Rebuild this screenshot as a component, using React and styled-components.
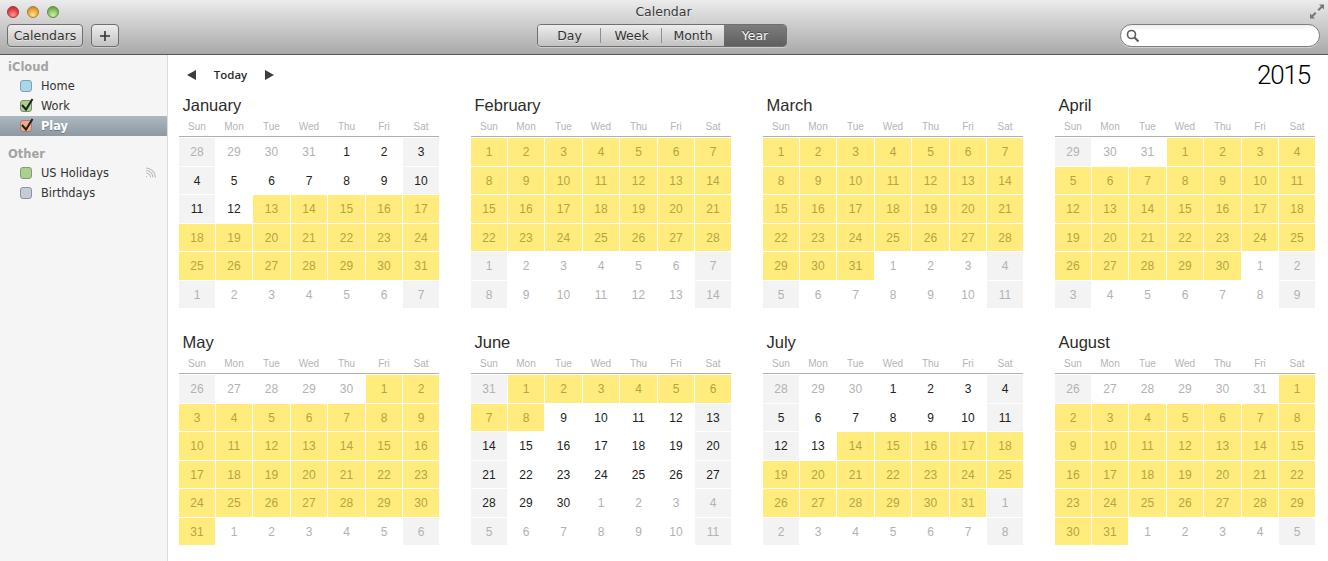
import React from "react";
import styled, { createGlobalStyle } from "styled-components";

const Global = createGlobalStyle`
  html, body { margin: 0; padding: 0; background: #fff; }
  body { width: 1328px; height: 561px; overflow: hidden; font-family: "DejaVu Sans", sans-serif; }
  * { box-sizing: border-box; }
`;

const Window = styled.div`
  width: 1328px;
  height: 561px;
  display: flex;
  flex-direction: column;
  overflow: hidden;
  background: #fff;
`;

const TitleBar = styled.header`
  position: relative;
  height: 55px;
  flex: none;
  background: linear-gradient(#ececec 0, #dcdcdc 12px, #a9a9a9 54px);
  border-bottom: 1px solid #565656;
  padding: 0 8px 0 7px;
`;

const Lights = styled.div`
  position: absolute;
  left: 7px;
  top: 6px;
  display: flex;
  gap: 8px;
`;

const Light = styled.span`
  width: 12px;
  height: 12px;
  border-radius: 50%;
  border: 1px solid ${p => p.$edge};
  background: radial-gradient(circle at 50% 80%, ${p => p.$glow} 0, ${p => p.$color} 55%, ${p => p.$dark} 100%);
`;

const WindowTitle = styled.div`
  height: 24px;
  padding-top: 4px;
  text-align: center;
  font-size: 12.5px;
  line-height: 16px;
  color: #3a3a3a;
  text-shadow: 0 1px 0 rgba(255, 255, 255, 0.5);
`;

const Expand = styled.svg`
  position: absolute;
  right: 3px;
  top: 4px;
`;

const Toolbar = styled.div`
  display: flex;
  align-items: center;
  height: 23px;
`;

const Button = styled.button`
  height: 23px;
  width: ${p => p.$width}px;
  margin-right: 8px;
  padding: 0;
  display: flex;
  align-items: center;
  justify-content: center;
  font: 12.5px "DejaVu Sans", sans-serif;
  color: #333;
  border: 1px solid #6f6f6f;
  border-radius: 4px;
  background: linear-gradient(#ededed, #c2c2c2);
  box-shadow: 0 1px 0 rgba(255, 255, 255, 0.35);
  text-shadow: 0 1px 0 rgba(255, 255, 255, 0.5);
`;

const Segments = styled.div`
  display: flex;
  height: 23px;
  margin-left: 410px;
  border: 1px solid #6f6f6f;
  border-radius: 4px;
  overflow: hidden;
  box-shadow: 0 1px 0 rgba(255, 255, 255, 0.35);
`;

const Segment = styled.div`
  width: ${p => p.$width}px;
  display: flex;
  align-items: center;
  justify-content: center;
  font-size: 12.5px;
  color: ${p => (p.$active ? "#f4f4f4" : "#333")};
  background: ${p => (p.$active ? "linear-gradient(#7d7d7d, #5f5f5f)" : "linear-gradient(#ededed, #c2c2c2)")};
  text-shadow: ${p => (p.$active ? "0 -1px 0 rgba(0,0,0,.4)" : "0 1px 0 rgba(255,255,255,.5)")};
  position: relative;
  &::after {
    content: "";
    display: ${p => (p.$divider ? "block" : "none")};
    position: absolute;
    right: 0;
    top: 3px;
    bottom: 3px;
    width: 1px;
    background: #8f8f8f;
  }
`;

const Search = styled.div`
  margin-left: auto;
  width: 200px;
  height: 23px;
  display: flex;
  align-items: center;
  padding-left: 5px;
  border: 1px solid #7d7d7d;
  border-radius: 12px;
  background: linear-gradient(#f0f0f0, #fff 6px);
  box-shadow: 0 1px 0 rgba(255, 255, 255, 0.4);
`;

const Body = styled.div`
  flex: 1;
  display: flex;
  min-height: 0;
`;

const Sidebar = styled.aside`
  width: 168px;
  flex: none;
  background: #f5f5f5;
  border-right: 1px solid #dcdcdc;
  padding-top: 5px;
`;

const Group = styled.div`
  height: 16px;
  padding-left: 8px;
  font-size: 11.5px;
  line-height: 15px;
  font-weight: bold;
  color: #a3a3a3;
`;

const Row = styled.div`
  position: relative;
  height: 20px;
  display: flex;
  align-items: center;
  padding-left: 20px;
  font-size: 11.4px;
  color: ${p => (p.$selected ? "#fff" : "#333")};
  font-weight: ${p => (p.$selected ? "bold" : "normal")};
  background: ${p => (p.$selected ? "linear-gradient(#adb7bf, #8d99a3)" : "none")};
  text-shadow: ${p => (p.$selected ? "0 1px 0 rgba(0,0,0,.3)" : "none")};
  margin-bottom: ${p => p.$after || 0}px;
`;

const Check = styled.span`
  position: relative;
  width: 12px;
  height: 12px;
  flex: none;
  margin-right: 9px;
  border-radius: 3px;
  border: 1px solid ${p => p.$edge};
  background: ${p => p.$color};
  svg {
    position: absolute;
    left: 0;
    top: -4px;
  }
`;

const Feed = styled.svg`
  position: absolute;
  left: 145px;
  top: 4px;
`;

const Content = styled.main`
  flex: 1;
  padding: 0 17px 0 11px;
`;

const Nav = styled.div`
  position: relative;
  height: 42px;
  display: flex;
  align-items: center;
  padding: 0 0 2px 8px;
`;

const Arrow = styled.span`
  width: 0;
  height: 0;
  border-top: 5px solid transparent;
  border-bottom: 5px solid transparent;
  ${p => (p.$left ? "border-right: 9px solid #3d3d3d;" : "border-left: 9px solid #3d3d3d;")}
`;

const Today = styled.span`
  width: 69px;
  margin-top: -1px;
  text-align: center;
  font-family: "Open Sans", sans-serif;
  font-size: 11.5px;
  font-weight: 600;
  color: #2c2c2c;
`;

const Year = styled.div`
  position: absolute;
  right: 5px;
  top: 3px;
  font-family: Roboto, sans-serif;
  font-weight: 300;
  font-size: 26px;
  letter-spacing: -1.2px;
  line-height: 34px;
  color: #000;
`;

const Months = styled.div`
  display: grid;
  grid-template-columns: repeat(4, 260px);
  column-gap: 32px;
  row-gap: 26px;
`;

const MonthBox = styled.section`
  width: 260px;
  height: 211px;
`;

const MonthName = styled.h2`
  margin: 0;
  height: 20px;
  padding-left: 3.5px;
  font-family: "Liberation Sans", sans-serif;
  font-size: 16.5px;
  font-weight: normal;
  line-height: 16px;
  color: #2b2b2b;
`;

const Weekdays = styled.div`
  display: grid;
  grid-template-columns: 36px 36px 37px 36px 37px 36px 36px;
  column-gap: 1px;
  height: 20px;
  padding: 3px 0 1px;
  border-bottom: 1px solid #b0b0b0;
  margin-bottom: 1px;
`;

const Weekday = styled.div`
  text-align: center;
  font-family: "Liberation Sans", sans-serif;
  font-size: 10px;
  line-height: 14px;
  color: #b4b4b4;
`;

const Days = styled.div`
  display: grid;
  grid-template-columns: 36px 36px 37px 36px 37px 36px 36px;
  grid-template-rows: 28px 27px 28px 27px 28px 27px;
  gap: 1px;
`;

const Day = styled.div`
  display: flex;
  align-items: center;
  justify-content: center;
  font-family: "Liberation Sans", sans-serif;
  font-size: 12px;
  color: ${p => p.$text};
  background: ${p => p.$fill};
`;

const weekdays = ["Sun", "Mon", "Tue", "Wed", "Thu", "Fri", "Sat"];

// first weekday, length, length of the month before, highlighted range
const months = [
  { name: "January", first: 4, len: 31, prev: 31, from: 13, to: 31 },
  { name: "February", first: 0, len: 28, prev: 31, from: 1, to: 28 },
  { name: "March", first: 0, len: 31, prev: 28, from: 1, to: 31 },
  { name: "April", first: 3, len: 30, prev: 31, from: 1, to: 30 },
  { name: "May", first: 5, len: 31, prev: 30, from: 1, to: 31 },
  { name: "June", first: 1, len: 30, prev: 31, from: 1, to: 8 },
  { name: "July", first: 3, len: 31, prev: 30, from: 14, to: 31 },
  { name: "August", first: 6, len: 31, prev: 31, from: 1, to: 31 },
];

const buildCells = m => {
  const cells = [];
  for (let i = 0; i < 42; i++) {
    const n = i - m.first + 1;
    const inside = n >= 1 && n <= m.len;
    const label = inside ? n : n < 1 ? m.prev + n : n - m.len;
    const marked = inside && n >= m.from && n <= m.to;
    const weekend = i % 7 === 0 || i % 7 === 6;
    cells.push({
      label,
      fill: marked ? "#ffec7c" : weekend ? "#f3f3f3" : "#fff",
      text: marked ? "#b5a443" : inside ? "#222" : "#b2b2b2",
    });
  }
  return cells;
};

const Month = ({ month }) => (
  <MonthBox>
    <MonthName>{month.name}</MonthName>
    <Weekdays>
      {weekdays.map(d => (
        <Weekday key={d}>{d}</Weekday>
      ))}
    </Weekdays>
    <Days>
      {buildCells(month).map((c, i) => (
        <Day key={i} $fill={c.fill} $text={c.text}>
          {c.label}
        </Day>
      ))}
    </Days>
  </MonthBox>
);

const Tick = () => (
  <svg width="14" height="15" viewBox="0 0 14 15">
    <path d="M1 8 L5 12.5 L11.5 2" fill="none" stroke="#1f1f1f" strokeWidth="2" />
  </svg>
);

const App = () => (
  <Window>
    <Global />
    <TitleBar>
      <Lights>
        <Light $color="#e8434a" $dark="#b3202a" $glow="#ff9a9a" $edge="#a3323a" />
        <Light $color="#e9a83e" $dark="#c27a1c" $glow="#ffe09a" $edge="#a87a30" />
        <Light $color="#86c15e" $dark="#4f9333" $glow="#cdf0a8" $edge="#5f8a45" />
      </Lights>
      <WindowTitle>Calendar</WindowTitle>
      <Expand width="16" height="15" viewBox="0 0 16 15">
        <path d="M15 0.5 H10 L11.8 2.3 L8.5 5.5 L10 7 L13.2 3.8 L15 5.5 Z M1 14.5 H6 L4.2 12.7 L7.5 9.5 L6 8 L2.8 11.2 L1 9.5 Z" fill="#777" />
      </Expand>
      <Toolbar>
        <Button $width={76}>Calendars</Button>
        <Button $width={28}>
          <svg width="12" height="12" viewBox="0 0 12 12">
            <path d="M6 1 V11 M1 6 H11" stroke="#333" strokeWidth="1.6" />
          </svg>
        </Button>
        <Segments>
          <Segment $width={63} $divider>Day</Segment>
          <Segment $width={61} $divider>Week</Segment>
          <Segment $width={62}>Month</Segment>
          <Segment $width={62} $active>Year</Segment>
        </Segments>
        <Search>
          <svg width="14" height="14" viewBox="0 0 14 14">
            <circle cx="5.5" cy="5.5" r="4" fill="none" stroke="#5a5a5a" strokeWidth="1.6" />
            <path d="M8.5 8.5 L12.5 12.5" stroke="#5a5a5a" strokeWidth="2" />
          </svg>
        </Search>
      </Toolbar>
    </TitleBar>
    <Body>
      <Sidebar>
        <Group>iCloud</Group>
        <Row>
          <Check $color="#a9d6e8" $edge="#7aa3b5" />
          Home
        </Row>
        <Row>
          <Check $color="#a8d090" $edge="#6f9460">
            <Tick />
          </Check>
          Work
        </Row>
        <Row $selected $after={11}>
          <Check $color="#eda98e" $edge="#b57a62">
            <Tick />
          </Check>
          Play
        </Row>
        <Group>Other</Group>
        <Row>
          <Check $color="#a8d090" $edge="#7f9f6c" />
          US Holidays
          <Feed width="11" height="11" viewBox="0 0 11 11">
            <path d="M1 9.5 h1 M1 6 a4.5 4.5 0 0 1 4.5 4.5 M1 3.5 a7 7 0 0 1 7 7 M1 1 a9.5 9.5 0 0 1 9.5 9.5" fill="none" stroke="#bdbdbd" strokeWidth="1.1" />
          </Feed>
        </Row>
        <Row>
          <Check $color="#c6ccd6" $edge="#8e939b" />
          Birthdays
        </Row>
      </Sidebar>
      <Content>
        <Nav>
          <Arrow $left />
          <Today>Today</Today>
          <Arrow />
          <Year>2015</Year>
        </Nav>
        <Months>
          {months.map(m => (
            <Month key={m.name} month={m} />
          ))}
        </Months>
      </Content>
    </Body>
  </Window>
);

export default App;
